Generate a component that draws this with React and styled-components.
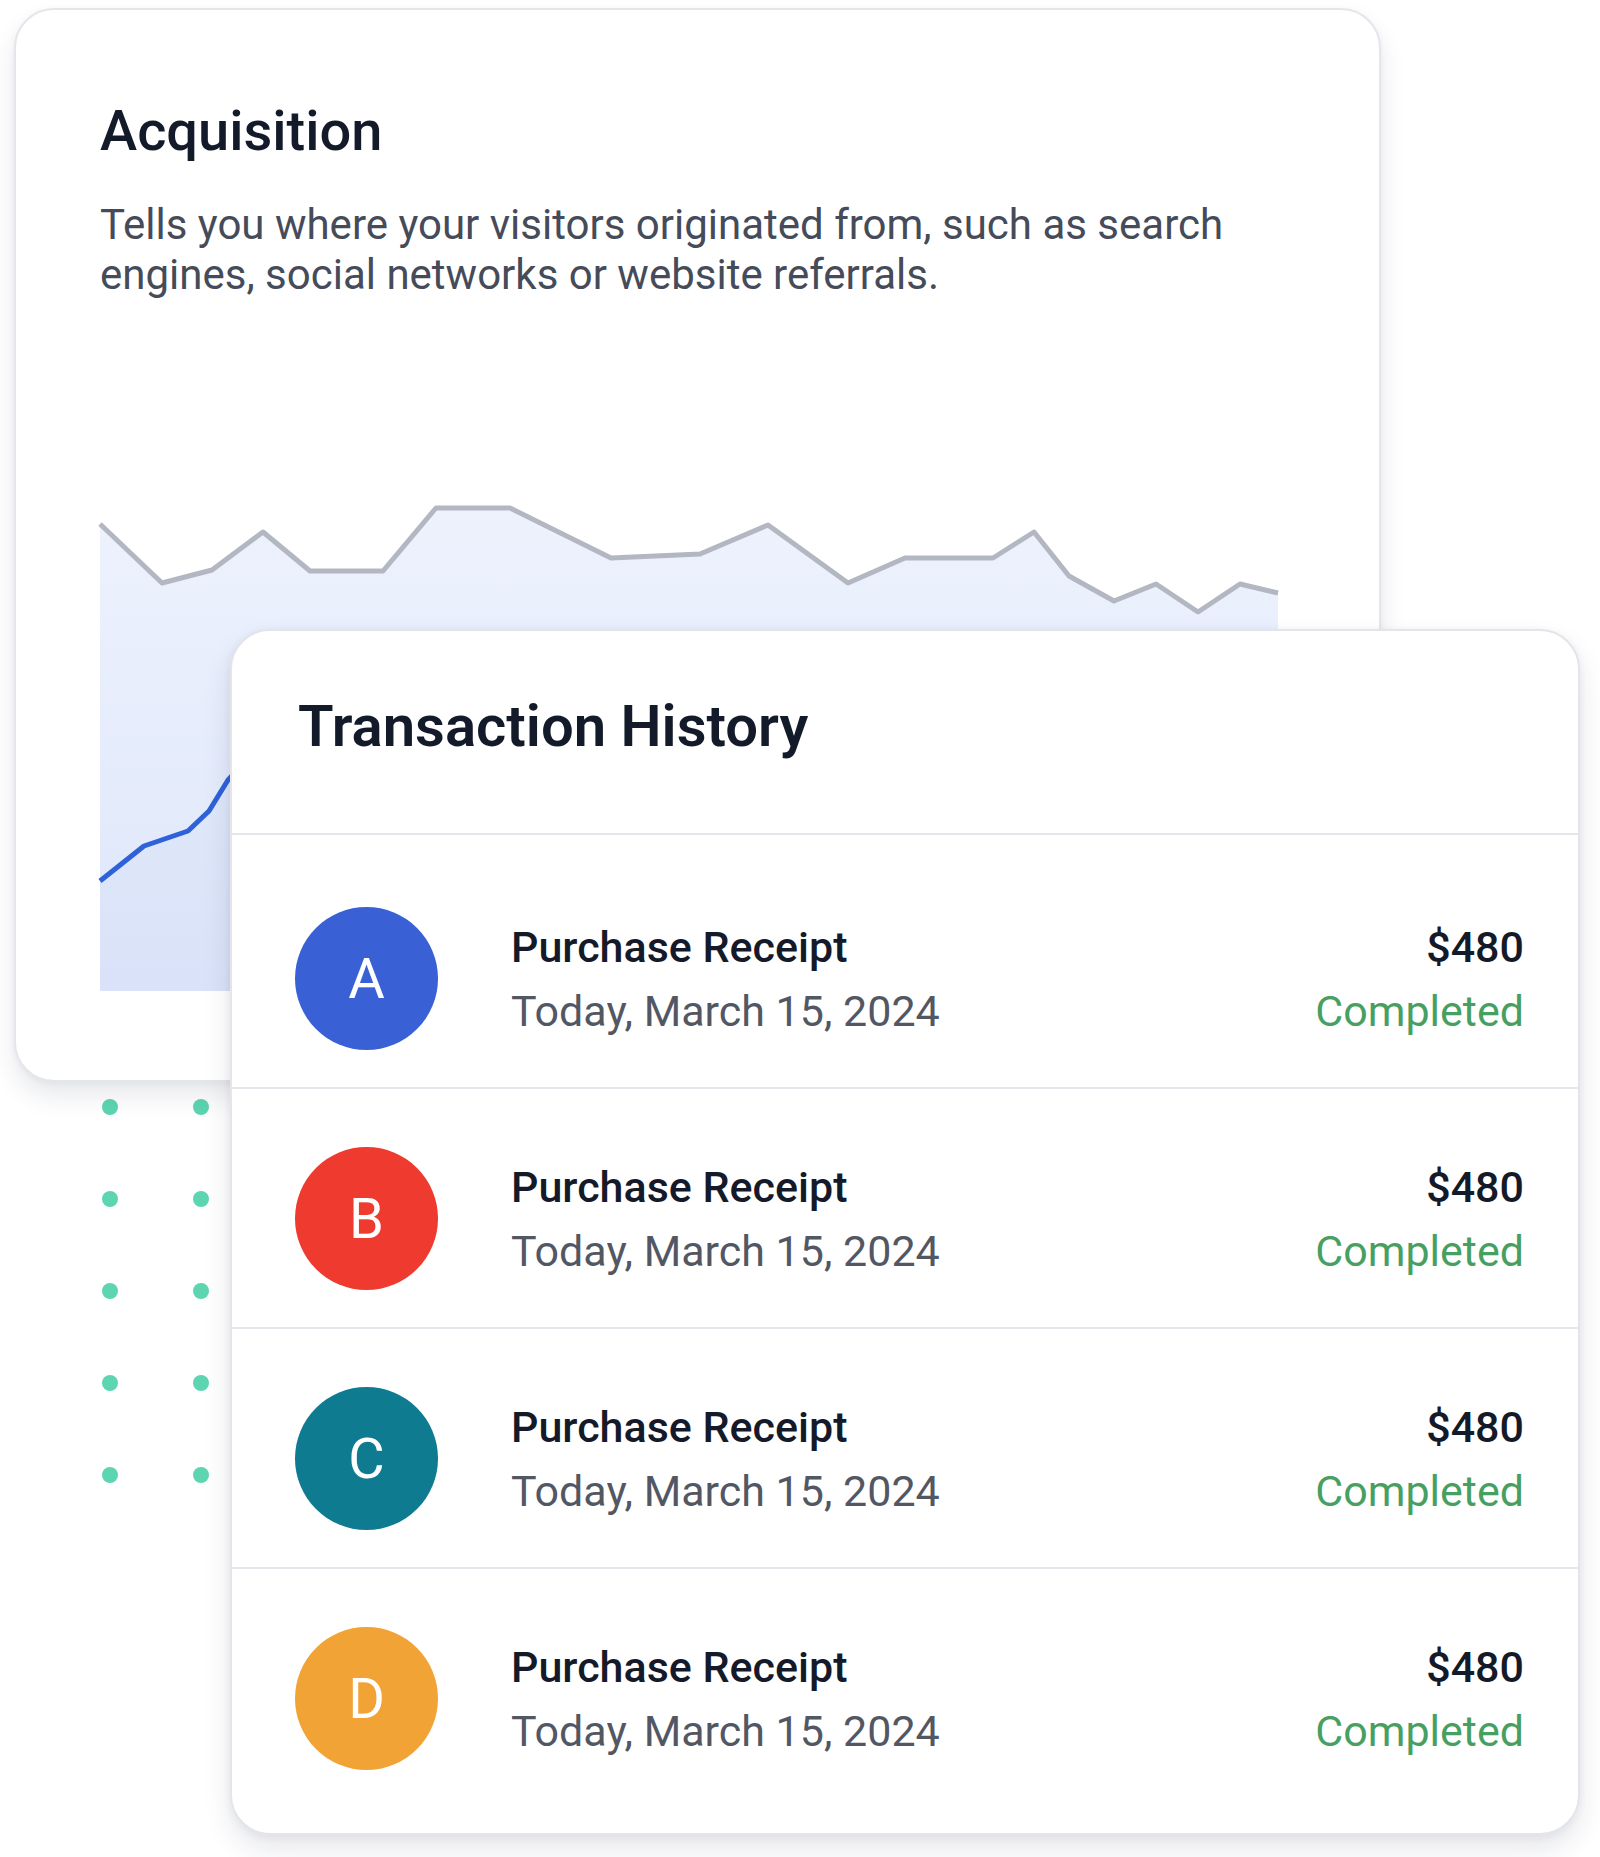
import React from "react";
import styled, { createGlobalStyle } from "styled-components";

const GlobalStyle = createGlobalStyle`
  html, body {
    margin: 0;
    padding: 0;
    background: #ffffff;
  }
  body {
    font-family: Roboto, "Noto Sans", "Liberation Sans", sans-serif;
    -webkit-font-smoothing: antialiased;
  }
  * { box-sizing: border-box; }
`;

const Stage = styled.div`
  position: relative;
  width: 1600px;
  min-height: 1857px;
  padding: 8px 0 0 14px;
  display: flex;
  flex-direction: column;
  align-items: flex-start;
`;

const DotField = styled.div`
  position: absolute;
  left: 102px;
  top: 1099px;
  display: grid;
  grid-template-columns: repeat(3, 16px);
  grid-auto-rows: 16px;
  column-gap: 75px;
  row-gap: 76px;
  z-index: 0;
`;

const Dot = styled.span`
  width: 16px;
  height: 16px;
  border-radius: 50%;
  background: #5dd5b1;
`;

const AcquisitionCard = styled.section`
  position: relative;
  z-index: 1;
  width: 1367px;
  padding: 88px 84px 89px;
  background: #ffffff;
  border: 2px solid #e4e6eb;
  border-radius: 40px;
  box-shadow: 0 14px 26px rgba(30, 40, 70, 0.10), 0 2px 6px rgba(30, 40, 70, 0.05);
`;

const CardTitle = styled.h2`
  margin: 0;
  font-size: ${(p) => p.$size || 56}px;
  line-height: 67px;
  font-weight: ${(p) => p.$weight || 500};
  color: #131a2a;
  letter-spacing: 0;
`;

const Description = styled.p`
  margin: 35px 0 0;
  max-width: 1190px;
  font-size: 42px;
  line-height: 50px;
  font-weight: 400;
  color: #464b5a;
`;

const ChartSvg = styled.svg`
  display: block;
  margin-top: 191px;
  width: 1178px;
  height: 500px;
  overflow: visible;
`;

const TransactionCard = styled.section`
  position: relative;
  z-index: 2;
  margin-top: -453px;
  margin-left: 216px;
  width: 1350px;
  background: #ffffff;
  border: 2px solid #e3e5ea;
  border-radius: 40px;
  overflow: hidden;
  box-shadow: 0 14px 28px rgba(30, 40, 70, 0.11), 0 2px 8px rgba(30, 40, 70, 0.06);
`;

const CardHeader = styled.header`
  padding: 62px 66px 73px;
  border-bottom: 2px solid #e4e6ec;
`;

const List = styled.ul`
  list-style: none;
  margin: 0;
  padding: 14px 0 26px;
`;

const Row = styled.li`
  display: flex;
  align-items: center;
  padding: 58px 54px 37px 63px;

  & + & {
    border-top: 2px solid #e4e6ec;
  }
`;

const Avatar = styled.div`
  flex: 0 0 143px;
  width: 143px;
  height: 143px;
  border-radius: 50%;
  background: ${(p) => p.$color};
  color: #ffffff;
  display: flex;
  align-items: center;
  justify-content: center;
  font-size: 56px;
  line-height: 1;
  font-weight: 400;
`;

const Info = styled.div`
  flex: 1;
  margin-left: 73px;
  display: flex;
  flex-direction: column;
`;

const Meta = styled.div`
  display: flex;
  flex-direction: column;
  align-items: flex-end;
  text-align: right;
`;

const Primary = styled.span`
  font-size: 43px;
  line-height: 64px;
  font-weight: 500;
  color: #141a29;
`;

const Secondary = styled.span`
  font-size: 43px;
  line-height: 64px;
  font-weight: 400;
  color: ${(p) => p.$color || "#535764"};
`;

const grayPts = [
  [0, 33], [62, 92], [112, 79], [163, 41], [210, 80], [283, 80], [336, 17],
  [410, 17], [511, 67], [600, 63], [668, 34], [748, 92], [805, 67], [893, 67],
  [934, 41], [969, 85], [1014, 110], [1056, 93], [1098, 121], [1140, 93], [1178, 102],
];

const bluePts = [
  [0, 390], [44, 355], [88, 340], [109, 320], [128, 289], [160, 255], [210, 220],
];

const toLine = (pts) => pts.map(([x, y]) => `${x},${y}`).join(" ");

function AcquisitionChart() {
  const area = `${toLine(grayPts)} 1178,500 0,500`;
  const blueArea = `${toLine(bluePts)} 210,500 0,500`;
  return (
    <ChartSvg viewBox="0 0 1178 500" aria-hidden="true">
      <defs>
        <linearGradient id="acqFill" x1="0" y1="0" x2="0" y2="1">
          <stop offset="0%" stopColor="#edf2fd" />
          <stop offset="100%" stopColor="#dee6f9" />
        </linearGradient>
      </defs>
      <polygon points={area} fill="url(#acqFill)" />
      <polygon points={blueArea} fill="rgba(47, 98, 216, 0.025)" />
      <polyline
        points={toLine(grayPts)}
        fill="none"
        stroke="#b3b7c2"
        strokeWidth="5"
        strokeLinejoin="round"
        strokeLinecap="butt"
      />
      <polyline
        points={toLine(bluePts)}
        fill="none"
        stroke="#2f62d8"
        strokeWidth="5"
        strokeLinejoin="round"
        strokeLinecap="butt"
      />
    </ChartSvg>
  );
}

const transactions = [
  { letter: "A", color: "#3a60d5" },
  { letter: "B", color: "#ee3a2f" },
  { letter: "C", color: "#0e7b90" },
  { letter: "D", color: "#f1a335" },
];

export default function App() {
  return (
    <>
      <GlobalStyle />
      <Stage>
        <DotField aria-hidden="true">
          {Array.from({ length: 15 }).map((_, i) => (
            <Dot key={i} />
          ))}
        </DotField>

        <AcquisitionCard>
          <CardTitle>Acquisition</CardTitle>
          <Description>
            Tells you where your visitors originated from, such as search
            engines, social networks or website referrals.
          </Description>
          <AcquisitionChart />
        </AcquisitionCard>

        <TransactionCard>
          <CardHeader>
            <CardTitle $size={58} $weight={600}>
              Transaction History
            </CardTitle>
          </CardHeader>
          <List>
            {transactions.map((t) => (
              <Row key={t.letter}>
                <Avatar $color={t.color}>{t.letter}</Avatar>
                <Info>
                  <Primary>Purchase Receipt</Primary>
                  <Secondary>Today, March 15, 2024</Secondary>
                </Info>
                <Meta>
                  <Primary>$480</Primary>
                  <Secondary $color="#47a062">Completed</Secondary>
                </Meta>
              </Row>
            ))}
          </List>
        </TransactionCard>
      </Stage>
    </>
  );
}
